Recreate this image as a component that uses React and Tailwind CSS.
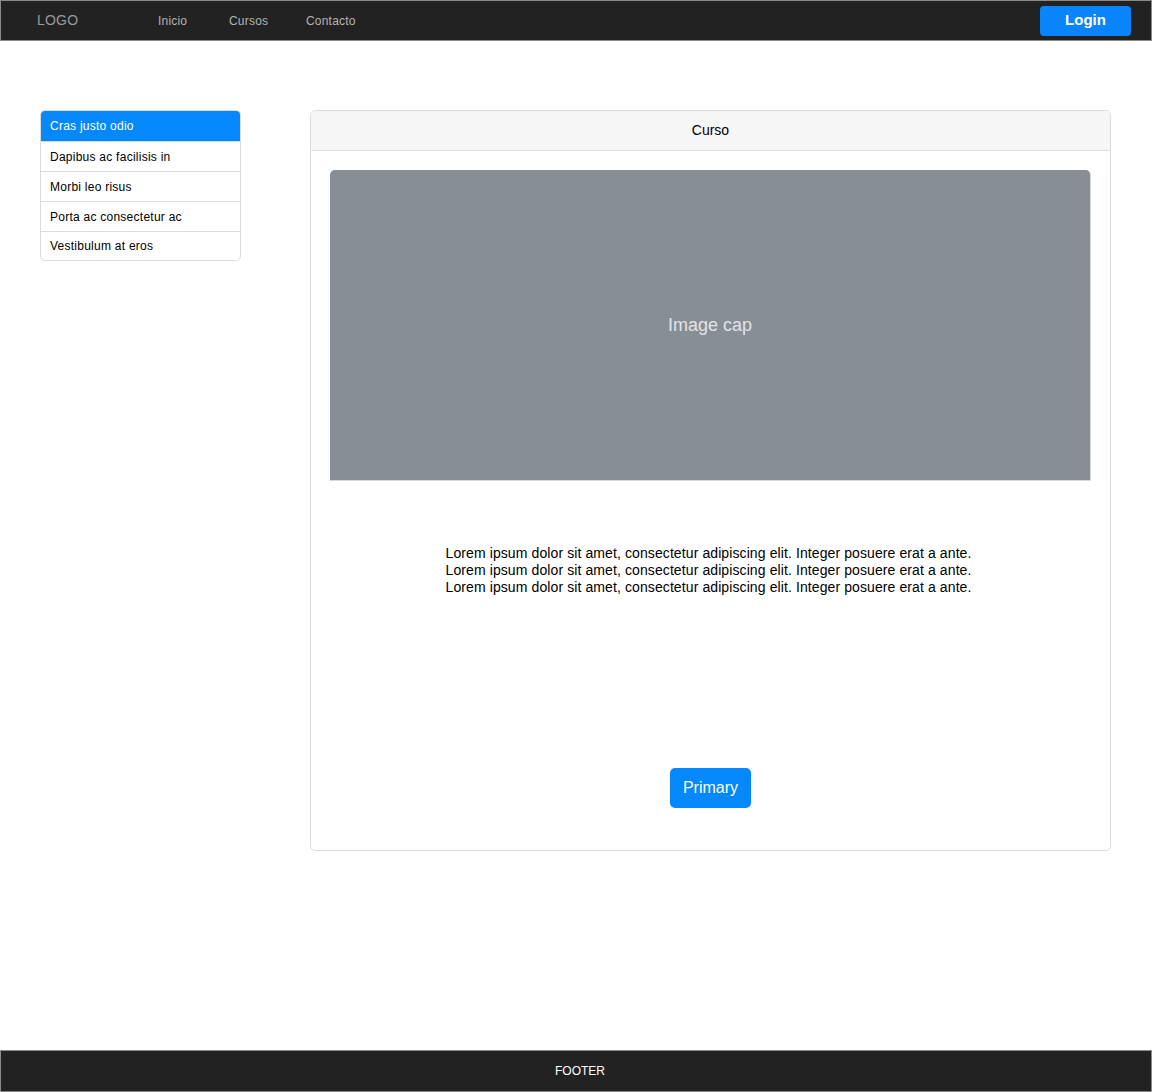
const ITEMS = [
  "Cras justo odio",
  "Dapibus ac facilisis in",
  "Morbi leo risus",
  "Porta ac consectetur ac",
  "Vestibulum at eros",
];

const LOREM = "Lorem ipsum dolor sit amet, consectetur adipiscing elit. Integer posuere erat a ante.";

export default function App() {
  return (
    <div className="min-h-[1092px] flex flex-col bg-white font-['Liberation_Sans',Arial,sans-serif]">
      {/* Top bar */}
      <header className="h-[41px] flex items-center bg-[#222222] border border-[#8a8a8a]">
        <span className="ml-[36px] w-[121px] text-[14px] text-[#9a9a9a] tracking-[0.2px]">LOGO</span>
        <nav className="flex items-center text-[12px] text-[#b4b4b4] tracking-[0.2px]">
          <span className="w-[71px]">Inicio</span>
          <span className="w-[77px]">Cursos</span>
          <span>Contacto</span>
        </nav>
        <button className="ml-auto mr-[20px] w-[91px] h-[30px] rounded-[4px] bg-[#0984fb] text-white text-[15px] font-bold">
          Login
        </button>
      </header>

      {/* Body */}
      <main className="flex items-start pt-[69px] pl-[40px]">
        <ul className="w-[201px] border border-[#dcdcdc] rounded-[5px] overflow-hidden text-[12px] tracking-[0.25px]">
          {ITEMS.map((item, i) => (
            <li
              key={item}
              className={`flex items-center pl-[9px] ${
                i === 0
                  ? "h-[30px] bg-[#0688fd] text-white"
                  : i === ITEMS.length - 1
                    ? "h-[29px] text-black border-t border-[#dcdcdc]"
                    : "h-[30px] text-black border-t border-[#dcdcdc]"
              }`}
            >
              {item}
            </li>
          ))}
        </ul>

        <section className="ml-[69px] w-[801px] border border-[#dcdcdc] rounded-[5px] overflow-hidden">
          <div className="h-[40px] flex items-center justify-center bg-[#f6f6f6] border-b border-[#dcdcdc] text-[14px] text-black">
            Curso
          </div>
          <div className="px-[19px] pt-[19px] pb-[42px] flex flex-col items-center">
            <div className="w-full h-[311px] rounded-t-[5px] bg-[#878e96] border-r border-b border-[#d8d8d8] flex items-center justify-center text-[18px] text-[#e1e3e6]">
              Image cap
            </div>
            <p className="mt-[64px] -ml-[4px] text-[14px] leading-[17px] text-black tracking-[0.1px]">
              {LOREM}
              <br />
              {LOREM}
              <br />
              {LOREM}
            </p>
            <button className="mt-[172px] w-[81px] h-[40px] rounded-[5px] bg-[#0688fd] text-white text-[16px]">
              Primary
            </button>
          </div>
        </section>
      </main>

      {/* Footer */}
      <footer className="mt-auto h-[42px] flex items-center justify-center pl-[8px] bg-[#222222] border border-[#8a8a8a] text-[12px] text-white">
        FOOTER
      </footer>
    </div>
  );
}
